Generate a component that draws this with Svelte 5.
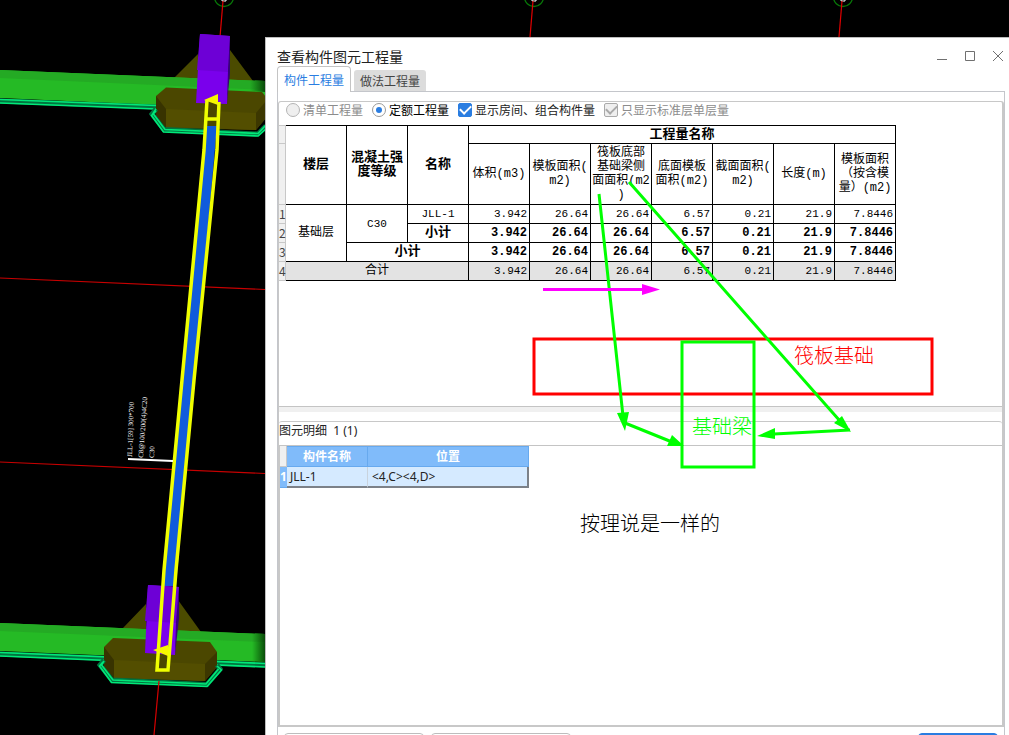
<script>
  const measures = [
    ['体积(m3)'],
    ['模板面积(', 'm2)'],
    ['筏板底部', '基础梁侧', '面面积(m2', ')'],
    ['底面模板', '面积(m2)'],
    ['截面面积(', 'm2)'],
    ['长度(m)'],
    ['模板面积', '（按含模', '量）(m2)']
  ];
  const values = ['3.942', '26.64', '26.64', '6.57', '0.21', '21.9', '7.8446'];
  const axes = [224, 534, 843];
  let mode = $state('quota');
  let showRooms = $state(true);
</script>

{#snippet numbers()}
  {#each values as v}<td class="num">{v}</td>{/each}
{/snippet}

<main class="workspace">
  <svg class="scene" aria-hidden="true">
    <defs>
      <linearGradient id="fade" x1="0" x2="1">
        <stop offset="0" stop-color="#003a00" stop-opacity="0" />
        <stop offset="1" stop-color="#002800" stop-opacity=".75" />
      </linearGradient>
    </defs>
    {#each axes as x}
      <circle cx={x} cy="-3" r="9.5" fill="none" stroke="#087808" stroke-width="1.3" />
      <path d="M{x - 2} 0v1h4v-1" stroke="#fff" fill="none" />
      <path d="M{x - 1} 1L{x - 4} 37" stroke="#e00000" stroke-width="1.2" />
    {/each}
    <path d="M0 278L265 289.5M0 462L265 473.5" stroke="#c80000" stroke-width="1.2" />

    <path d="M174 78L198 54V80zM230 50L253 81H229z" fill="#4b4b00" />
    <path d="M0 70L265 81V108L156 105L0 98z" fill="#25ba25" />
    <path d="M0 70L265 81V90L0 78z" fill="#24aa24" />
    <path d="M250 80L265 81V92L250 91z" fill="url(#fade)" />
    <path d="M0 101L156 107" stroke="#007540" stroke-width="5" />
    <path d="M0 99.5L156 105.500M0 103L156 109" stroke="#00e879" stroke-width="1.6" />
    <path d="M156 96L166 87.500L262 92L266 97V118L256 130L166 128L156 115z" fill="#4b4700" />
    <path d="M156 96L166 109V128L156 115z" fill="#383300" />
    <path d="M166 109L256 113V130L166 127z" fill="#534e00" />
    <path d="M256 113L266 101V118L256 130z" fill="#3c3700" />
    <path d="M156 109L152 114L164 129.500L258 134L266 126" fill="none" stroke="#007540" stroke-width="5" />
    <path d="M156 109L153 113.500L165 129.500L258 133.500L266 125M156 111L151.500 115.500L163.500 132L258 136L266 129" fill="none" stroke="#00e879" stroke-width="1.6" />
    <path d="M200 34L230 36L227 104L196 103z" fill="#7a00ec" />
    <path d="M200 34L230 36L228 72L197 70z" fill="#6d00d6" />
    <path d="M230 36V72L227 104L228 70z" fill="#38007a" />

    <path d="M123 628L146 604V632zM178 600L201 632H176z" fill="#4b4b00" />
    <path d="M0 623L265 634V662L0 651z" fill="#25ba25" />
    <path d="M0 623L265 634V642L0 631z" fill="#24aa24" />
    <path d="M252 633L265 634V662L252 661z" fill="url(#fade)" />
    <path d="M0 654L265 665" stroke="#007540" stroke-width="5" />
    <path d="M0 652.500L265 663.500M0 656L265 667" stroke="#00e879" stroke-width="1.6" />
    <path d="M104 647L113 638L210 642L217 652V667L205 681L114 678L104 667z" fill="#4b4700" />
    <path d="M104 647L114 660V678L104 667z" fill="#383300" />
    <path d="M114 660L205 664V681L114 678z" fill="#534e00" />
    <path d="M205 664L217 652V667L205 681z" fill="#3c3700" />
    <path d="M104 660L100 665L112 680L207 684.500L220 669L217 665" fill="none" stroke="#007540" stroke-width="5" />
    <path d="M104 661L101.500 665L113 680L206 684L218.500 669M103 662L99.500 666L111.500 682.500L207 686.500L221.500 670L217 666" fill="none" stroke="#00e879" stroke-width="1.6" />
    <path d="M148 585L179 587L175 655L145 653z" fill="#7a00ec" />
    <path d="M148 585L179 587L177 623L145 621z" fill="#6d00d6" />
    <path d="M179 587V618L175 655L176 622z" fill="#38007a" />

    <path d="M205 126H217L176 586H163z" fill="#105bdc" />
    <path d="M208 101L206 126H217L218 102z" fill="#4b4700" />
    <path d="M159 655L158 669H167L169 655z" fill="#4b4700" />
    <path d="M207 100L204 150L182 380L164 570L157 670H168L176 570L194 380L217 150L219 102M206 119H218" fill="none" stroke="#f0ff00" stroke-width="3.500" />
    <path d="M204 100L218 94V105zM153 650L168 645V656z" fill="#f7f700" />
    <path d="M159 681L154 735" stroke="#d80000" stroke-width="1.2" />
    <path d="M128 459L173 461" stroke="#fff" stroke-width="2" />
    <g class="beam-label">
      <text transform="translate(132 457) rotate(-88)">JLL-1[59] 300*700</text>
      <text transform="translate(143 458) rotate(-86)">C8@100/200(4)4C20</text>
      <text transform="translate(154 458) rotate(-88)">C30</text>
    </g>
  </svg>

  <section class="dialog" aria-labelledby="dialog-title">
    <header class="titlebar">
      <h1 id="dialog-title">查看构件图元工程量</h1>
      <div class="window-buttons">
        <button aria-label="最小化"><svg width="12" height="12"><path d="M1 9.500h10" /></svg></button>
        <button aria-label="最大化"><svg width="12" height="12"><path d="M1.500 1.500h9v9h-9z" /></svg></button>
        <button aria-label="关闭"><svg width="12" height="12"><path d="M1 1l10 10M11 1L1 11" /></svg></button>
      </div>
    </header>

    <div class="tabs" role="tablist">
      <button class="tab active" role="tab" aria-selected="true">构件工程量</button>
      <button class="tab" role="tab" aria-selected="false">做法工程量</button>
    </div>

    <div class="pane">
      <div class="stack">
        <section class="quantities">
          <div class="options">
            <label class="off"><input type="radio" name="mode" value="bill" bind:group={mode} disabled />清单工程量</label>
            <label class="strong"><input type="radio" name="mode" value="quota" bind:group={mode} />定额工程量</label>
            <label><input type="checkbox" bind:checked={showRooms} />显示房间、组合构件量</label>
            <label class="off"><input type="checkbox" checked disabled />只显示标准层单层量</label>
          </div>
          <table class="report">
            <colgroup>
              <col class="index" />
              {#each Array(10) as _}<col class="cell" />{/each}
            </colgroup>
            <thead>
              <tr class="group-row">
                <td class="idx"></td>
                <th rowspan="2">楼层</th>
                <th rowspan="2">混凝土强<br />度等级</th>
                <th rowspan="2">名称</th>
                <th colspan="7">工程量名称</th>
              </tr>
              <tr class="measure-row">
                <td class="idx"></td>
                {#each measures as lines}
                  <th class="measure">{#each lines as line, i}{#if i}<br />{/if}{line}{/each}</th>
                {/each}
              </tr>
            </thead>
            <tbody>
              <tr>
                <td class="idx">1</td>
                <td rowspan="3">基础层</td>
                <td rowspan="2" class="code">C30</td>
                <td class="code">JLL-1</td>
                {@render numbers()}
              </tr>
              <tr class="subtotal">
                <td class="idx">2</td>
                <td>小计</td>
                {@render numbers()}
              </tr>
              <tr class="subtotal">
                <td class="idx">3</td>
                <td colspan="2">小计</td>
                {@render numbers()}
              </tr>
              <tr class="total">
                <td class="idx">4</td>
                <td colspan="3">合计</td>
                {@render numbers()}
              </tr>
            </tbody>
          </table>
        </section>

        <div class="splitter"></div>

        <section class="details">
          <h2>图元明细&nbsp; 1 (1)</h2>
          <div class="details-body">
            <table class="elements">
              <colgroup><col class="index" /><col class="name" /><col class="place" /></colgroup>
              <thead>
                <tr><td class="corner"></td><th>构件名称</th><th>位置</th></tr>
              </thead>
              <tbody>
                <tr><td class="row-no">1</td><td>JLL-1</td><td>&lt;4,C&gt;&lt;4,D&gt;</td></tr>
              </tbody>
            </table>
          </div>
        </section>
      </div>

      <footer class="actions">
        <button class="action" aria-label="设置分类及工程量"></button>
        <button class="action" aria-label="导出到Excel"></button>
        <button class="action primary" aria-label="退出"></button>
      </footer>
    </div>
  </section>

  <svg class="notes">
    <rect x="534" y="339" width="398" height="55" stroke="#f00" />
    <rect x="682" y="342" width="72" height="125" stroke="#0f0" />
    <g stroke="#0f0">
      <path d="M599 194L623 416M625 423L672 442M629 182L840 421M850 430L774 434" />
    </g>
    <path d="M543 289.500H643" stroke="#f0f" />
    <g class="heads">
      <path d="M617 413L629 412L625 431zM667 446L672 435L684 446zM834 423L842 416L851 432zM775 428L757 436L775 439z" fill="#0f0" />
      <path d="M642 284L660 289.500L642 295z" fill="#f0f" />
    </g>
    <text x="794" y="363" fill="#f00">筏板基础</text>
    <text x="692" y="434" fill="#0f0">基础梁</text>
    <text x="580" y="531" fill="#000">按理说是一样的</text>
  </svg>
</main>

<style>
  :global(body) { background: #000; overflow: hidden; }
  * { box-sizing: border-box; }
  .workspace {
    position: relative;
    display: flex;
    height: 100vh;
    padding: 37px 0 0 265px;
    overflow: hidden;
    color: #222;
    font: 12px/16px "Noto Sans CJK SC", sans-serif;
  }
  .scene, .notes { position: absolute; inset: 0; width: 100%; height: 100%; }
  .notes { pointer-events: none; fill: none; stroke-width: 3; }
  .notes .heads { stroke: none; }
  .notes text { font-size: 20px; font-weight: 300; stroke: none; }
  .beam-label text { fill: #fff; font: 7px "Liberation Serif", serif; }

  .dialog {
    position: relative;
    flex: 1;
    display: flex;
    flex-direction: column;
    height: 100vh;
    padding: 0 4px 0 11px;
    background: #fff;
    border-top: 1px solid #bdbdbd;
    border-left: 1px solid #bdbdbd;
  }
  .titlebar { display: flex; justify-content: space-between; align-items: center; height: 28px; padding: 7px 1px 0 0; }
  h1 { margin: 0; font-size: 14px; line-height: 20px; font-weight: 400; }
  .window-buttons { display: flex; gap: 16px; }
  .window-buttons button { display: flex; padding: 0; border: 0; background: none; }
  .window-buttons path { fill: none; stroke: #707070; }

  .tabs { display: flex; align-items: flex-end; gap: 3px; height: 25px; }
  .tab {
    height: 21px;
    padding: 0 6px;
    border: 0;
    border-radius: 3px 3px 0 0;
    background: #dcdcdc;
    color: #444;
    font: inherit;
  }
  .tab.active {
    z-index: 1;
    height: 26px;
    margin-bottom: -1px;
    border: 1px solid #c4c4c4;
    border-bottom: 0;
    border-radius: 4px 4px 0 0;
    background: #fff;
    color: #2a7de1;
  }

  .pane {
    flex: 1;
    min-height: 0;
    display: flex;
    flex-direction: column;
    padding-top: 9px;
    border: 1px solid #c4c6cb;
  }
  .stack {
    flex: 1;
    min-height: 0;
    display: flex;
    flex-direction: column;
    border: 1px solid #c8c8c8;
    border-width: 1px 2px 2px 1px;
    border-radius: 3px 3px 0 0;
  }
  .quantities { flex: 1; border-bottom: 1px solid #c4c4c4; }
  .splitter { height: 14px; border-top: 5px solid #f0f0f0; }
  .details { flex: 0 0 304px; display: flex; flex-direction: column; border-top: 1px solid #c8c8c8; border-radius: 3px 3px 0 0; }

  .options { display: flex; gap: 9px; height: 23px; padding: 0 7px 7px; }
  label { display: flex; align-items: center; gap: 3px; white-space: nowrap; }
  label.off { color: #8c8c8c; }
  label.strong { color: #000; }
  input { appearance: none; display: grid; place-items: center; width: 14px; height: 14px; margin: 0; border: 1px solid #9a9a9a; background: #fff; }
  input[type="radio"] { border-radius: 50%; }
  input[type="radio"]:checked::after { content: ""; width: 6px; height: 6px; border-radius: 50%; background: #2a7de1; }
  input[type="checkbox"] { border-radius: 2px; }
  input[type="checkbox"]:checked { border-color: #2a7de1; background: #2a7de1; }
  input[type="checkbox"]:checked::after {
    content: "";
    width: 9px;
    height: 5px;
    margin-bottom: 3px;
    border: solid #fff;
    border-width: 0 0 2px 2px;
    transform: rotate(-45deg);
  }
  input[type="radio"]:disabled { background: #efefef; border-color: #b4b4b4; }
  input[type="checkbox"]:disabled { background: #efefef; border-color: #aaa; }
  input[type="checkbox"]:disabled::after { border-color: #aaa; }

  table { table-layout: fixed; border-collapse: separate; border-spacing: 0; }
  td, th { padding: 0; }
  col.index { width: 7px; }
  col.cell { width: 61px; }
  .report { width: 617px; color: #000; font: 12px/14px "Liberation Mono", "Noto Sans CJK SC", monospace; text-align: center; }
  .report td, .report th { height: 19px; border: solid #000; border-width: 0 1px 1px 0; white-space: nowrap; }
  .report th { font-size: 13px; }
  .report th.measure { font-size: 12px; font-weight: 400; }
  .report .group-row > * { height: 19px; border-top-width: 1px; }
  .report .measure-row > * { height: 61px; }
  .report .code { font-size: 11px; }
  .report .num { padding-right: 2px; font-size: 11px; text-align: right; }
  .subtotal td { font-size: 13px; font-weight: 700; }
  .report .subtotal .num { font-size: 12px; }
  .total td { background: #e3e3e3; }
  .report .idx {
    border-color: #c8c8c8;
    background: #f0f0f0;
    color: #444;
    font: 12px/14px "Noto Sans CJK SC", sans-serif;
  }

  h2 { margin: 0; height: 23px; font: 400 12px/18px "Noto Sans", "Noto Sans CJK SC", sans-serif; }
  .details-body { flex: 1; border-top: 1px solid #c4c4c4; border-left: 1px solid #c8c8c8; }
  .elements { width: 249px; font: 12px/16px "Noto Sans", "Noto Sans CJK SC", sans-serif; }
  col.name { width: 81px; }
  .elements th { height: 21px; border: solid #67a9ee; border-width: 1px 1px 1px 0; background: #80bbfa; color: #fff; font-weight: 700; }
  .elements td { height: 21px; padding-left: 3px; background: #d5eaff; border-right: 1px solid #c9d3dd; border-bottom: 2px solid #7c8188; }
  .elements td:last-child { padding-left: 4px; border-right: 2px solid #7c8188; }
  .elements .corner { padding: 0; background: #f0f0f0; border: solid #c8c8c8; border-width: 0 1px 1px 0; }
  .elements .row-no { padding: 0; background: #80bbfa; border: 0; border-bottom: 1px solid #67a9ee; color: #fff; font-weight: 700; }

  .actions { display: flex; gap: 7px; padding: 6px 6px 10px; }
  .action { width: 140px; height: 28px; border: 1px solid #bdbdbd; border-radius: 4px; background: #fff; }
  .action.primary { width: 80px; margin-left: auto; border-color: #2a7de1; background: #2a7de1; }
</style>
